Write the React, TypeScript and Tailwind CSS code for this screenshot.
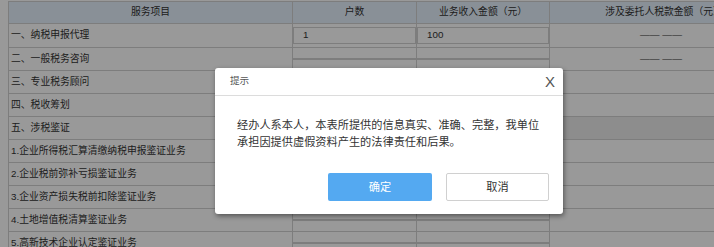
const rows = [
  { name: "一、纳税申报代理", count: "1", income: "100", amount: "—— ——", kind: "input" },
  { name: "二、一般税务咨询", count: "", income: "", amount: "—— ——", kind: "input" },
  { name: "三、专业税务顾问", count: "", income: "", amount: "", kind: "input" },
  { name: "四、税收筹划", count: "", income: "", amount: "", kind: "input" },
  { name: "五、涉税鉴证", count: "", income: "", amount: "", kind: "section" },
  { name: "1.企业所得税汇算清缴纳税申报鉴证业务", count: "", income: "", amount: "", kind: "input" },
  { name: "2.企业税前弥补亏损鉴证业务", count: "", income: "", amount: "", kind: "input" },
  { name: "3.企业资产损失税前扣除鉴证业务", count: "", income: "", amount: "", kind: "input" },
  { name: "4.土地增值税清算鉴证业务", count: "", income: "", amount: "", kind: "input" },
  { name: "5.高新技术企业认定鉴证业务", count: "", income: "", amount: "", kind: "input" },
];

function InputCell({ value }: { value: string }) {
  return (
    <td className="border border-[#d0d0d0] p-0">
      <div className="flex h-full items-center border border-[#d0d0d0] bg-white px-[9px]">
        {value}
      </div>
    </td>
  );
}

export default function App() {
  return (
    <div
      className="relative h-[247px] w-[714px] overflow-hidden bg-white"
      style={{ fontFamily: '"Liberation Sans", "Noto Sans CJK SC", sans-serif' }}
    >
      <div className="pl-2 pt-px">
        <table className="w-[770px] table-fixed border-collapse text-[9.8px] text-[#333]">
          <colgroup>
            <col className="w-[284px]" />
            <col className="w-[124px]" />
            <col className="w-[133px]" />
            <col className="w-[229px]" />
          </colgroup>
          <thead>
            <tr className="h-[22px] bg-[#e4f0fc]">
              <th className="border border-[#d0d0d0] font-normal">服务项目</th>
              <th className="border border-[#d0d0d0] font-normal">户数</th>
              <th className="border border-[#d0d0d0] font-normal">业务收入金额（元）</th>
              <th className="border border-[#d0d0d0] font-normal whitespace-nowrap">涉及委托人税款金额（元）</th>
            </tr>
          </thead>
          <tbody>
            {rows.map((row, i) => (
              <tr key={row.name} className={i === 0 ? "h-[24px]" : "h-[23px]"}>
                <td className="border border-[#d0d0d0] pl-[2px] whitespace-nowrap">{row.name}</td>
                {row.kind === "section" ? (
                  <>
                    <td className="border border-[#d0d0d0] bg-[#ececec]" />
                    <td className="border border-[#d0d0d0] bg-[#ececec]" />
                    <td className="border border-[#d0d0d0] bg-[#ececec]" />
                  </>
                ) : (
                  <>
                    <InputCell value={row.count} />
                    <InputCell value={row.income} />
                    <td className="border border-[#d0d0d0] pr-[6px] text-center">{row.amount}</td>
                  </>
                )}
              </tr>
            ))}
          </tbody>
        </table>
      </div>

      {/* mask */}
      <div className="absolute inset-0 bg-black/40" />

      {/* dialog */}
      <div className="absolute left-[215px] top-[68px] flex w-[348px] flex-col rounded-[3px] bg-white shadow-[1px_2px_5px_rgba(0,0,0,0.45)]">
        <div className="flex h-[28px] items-center justify-between border-b border-[#dcdcdc] pl-[15px] pr-[8px]">
          <span className="text-[9.6px] text-[#555]">提示</span>
          <span className="text-[15px] leading-none text-[#555]">X</span>
        </div>
        <div className="px-[22px] pt-[21px] text-[11.2px] leading-[17px] text-[#333]">
          经办人系本人，本表所提供的信息真实、准确、完整，我单位承担因提供虚假资料产生的法律责任和后果。
        </div>
        <div className="flex justify-end gap-[14px] pb-[13px] pr-[14px] pt-[22px]">
          <button className="h-[28px] w-[104px] rounded-[2px] bg-[#54a9f1] text-[11.2px] text-white">
            确定
          </button>
          <button className="h-[28px] w-[103px] rounded-[2px] border border-[#d0d0d0] bg-white text-[11.2px] text-[#333]">
            取消
          </button>
        </div>
      </div>
    </div>
  );
}
